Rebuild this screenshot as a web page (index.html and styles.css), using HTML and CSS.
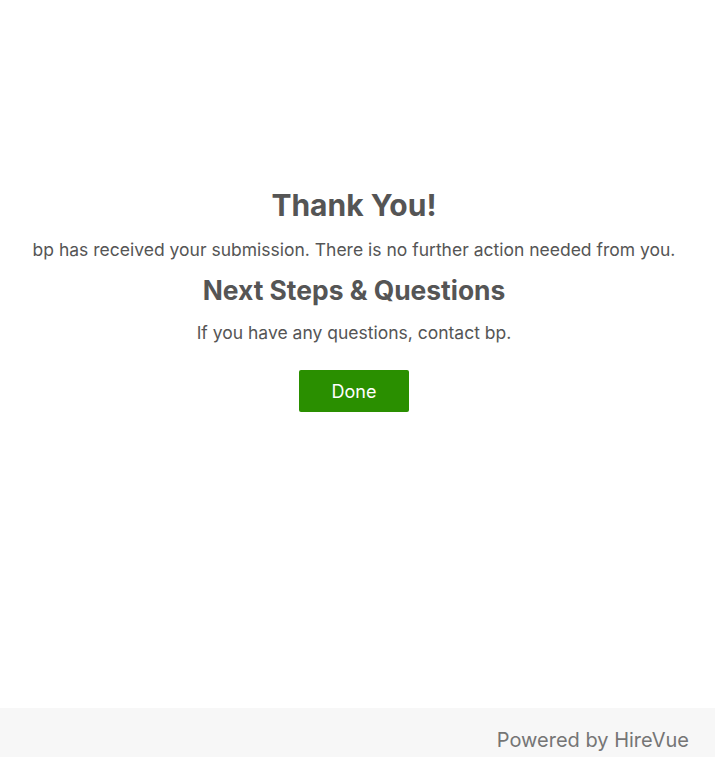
FILE: index.html
```html
<!DOCTYPE html>
<html lang="en">
<head>
<meta charset="utf-8">
<title>Thank You</title>
<link rel="stylesheet" href="styles.css">
</head>
<body>
<div class="page">
  <main class="content">
    <h1 class="title">Thank You!</h1>
    <p class="text first">bp has received your submission. There is no further action needed from you.</p>
    <h2 class="subtitle">Next Steps &amp; Questions</h2>
    <p class="text">If you have any questions, contact bp.</p>
    <button class="done" type="button">Done</button>
  </main>
  <footer class="footer">Powered by HireVue</footer>
</div>
</body>
</html>
```

FILE: styles.css
```css
html, body {
  margin: 0;
  padding: 0;
  height: 100%;
  background: #ffffff;
  overflow: hidden;
}
body {
  font-family: Inter, "Noto Sans", sans-serif;
  color: #555555;
}
.page {
  display: flex;
  flex-direction: column;
  height: 757px;
}
.content {
  flex: 1;
  display: flex;
  flex-direction: column;
  align-items: center;
  padding: 186px 7px 0 0;
  text-align: center;
}
.title {
  margin: 0;
  font-size: 30px;
  font-weight: 700;
  line-height: 38px;
}
.subtitle {
  margin: 11px 0 0;
  font-size: 26.4px;
  font-weight: 700;
  line-height: 34px;
}
.text {
  margin: 14px 0 0;
  font-size: 17.5px;
  line-height: 24px;
}
.text.first {
  margin-top: 14px;
}
.done {
  margin-top: 25px;
  width: 110px;
  height: 42px;
  border: none;
  border-radius: 2px;
  background: #2a8f00;
  color: #ffffff;
  font-family: Inter, "Noto Sans", sans-serif;
  font-size: 18px;
  cursor: pointer;
}
.footer {
  height: 49px;
  background: #f7f7f7;
  color: #757575;
  font-size: 20px;
  line-height: 24px;
  text-align: right;
  padding: 20px 26px 0 0;
  box-sizing: border-box;
}
```
